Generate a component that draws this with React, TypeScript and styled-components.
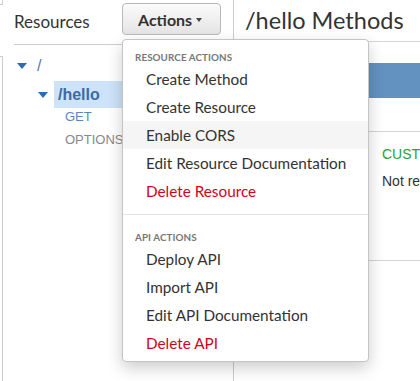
import styled, { createGlobalStyle } from 'styled-components';

const GlobalStyle = createGlobalStyle`
  html, body {
    margin: 0;
    padding: 0;
    background: #fff;
  }
  body {
    font-family: Lato, "Liberation Sans", Arial, sans-serif;
    color: #333;
  }
`;

const Page = styled.div`
  display: grid;
  grid-template-columns: 3px 230px 1fr;
  width: 420px;
  height: 381px;
  overflow: hidden;
`;

/* right edge of the collapsed navigation panel */
const Edge = styled.div`
  display: flex;
  flex-direction: column;
`;

const EdgeBox = styled.div<{ $top?: boolean }>`
  border-right: 1px solid #ccc;
  ${({ $top }) =>
    $top
      ? `height: 4px; border-bottom: 1px solid #ccc;`
      : `flex: 1; margin-top: 51px; border-top: 1px solid #ccc;`}
`;

const LeftCol = styled.div`
  display: flex;
  flex-direction: column;
  min-width: 0;
`;

const LeftHeader = styled.div`
  display: grid;
  grid-template-columns: 108px auto;
  align-items: start;
  margin-left: 11px;
  height: 44px;
  border-bottom: 1px solid #ccc;
`;

const PanelTitle = styled.div`
  margin-top: 12px;
  font-size: 17px;
  line-height: 20px;
  color: #333;
`;

const ActionsWrap = styled.div`
  position: relative;
  margin-top: 3px;
`;

const ActionsButton = styled.button`
  display: flex;
  align-items: center;
  box-sizing: border-box;
  width: 99px;
  height: 32px;
  padding: 0 0 0 15px;
  border: 1px solid #b9b9b9;
  border-radius: 4px;
  background: linear-gradient(#fbfbfb, #e4e4e4);
  font-family: Lato, "Liberation Sans", sans-serif;
  font-weight: 700;
  font-size: 16px;
  color: #333;
`;

const Caret = styled.span`
  display: inline-block;
  margin-left: 4px;
  margin-top: 2px;
  border-left: 3.5px solid transparent;
  border-right: 3.5px solid transparent;
  border-top: 4px solid #444;
`;

const Menu = styled.div`
  position: absolute;
  top: 36px;
  left: 0;
  z-index: 10;
  box-sizing: border-box;
  width: 247px;
  padding: 10px 0 4px;
  background: #fff;
  border: 1px solid #c4c4c4;
  border-radius: 4px;
  box-shadow: 0 6px 16px rgba(0, 0, 0, 0.2);
`;

const MenuHeader = styled.div<{ $spaced?: boolean }>`
  padding-left: 12px;
  margin-top: ${({ $spaced }) => ($spaced ? '15px' : '0')};
  font-size: 9.8px;
  line-height: 15px;
  font-weight: 700;
  color: #777;
  letter-spacing: 0.1px;
  text-transform: uppercase;
`;

const MenuItem = styled.div<{ $danger?: boolean; $active?: boolean }>`
  padding: 4px 0 4px 23px;
  font-size: 15.3px;
  line-height: 20px;
  white-space: nowrap;
  color: ${({ $danger }) => ($danger ? '#d0021b' : '#333')};
  background: ${({ $active }) => ($active ? '#f5f5f5' : 'transparent')};
`;

const Divider = styled.div`
  height: 1px;
  margin-top: 9px;
  background: #e3e3e3;
`;

const Tree = styled.div`
  display: flex;
  flex-direction: column;
  padding-top: 11px;
  font-family: "Liberation Sans", Arial, sans-serif;
`;

const Node = styled.div<{ $depth: number }>`
  display: flex;
  align-items: center;
  padding-left: ${({ $depth }) => 14 + $depth * 21}px;
  margin-top: ${({ $depth }) => ($depth ? 5 : 0)}px;
`;

const Toggle = styled.span`
  flex: none;
  border-left: 5px solid transparent;
  border-right: 5px solid transparent;
  border-top: 6px solid #2b6cb5;
`;

const NodeLabel = styled.span<{ $selected?: boolean }>`
  flex: 1;
  margin-left: ${({ $selected }) => ($selected ? '6px' : '10px')};
  padding-left: ${({ $selected }) => ($selected ? '4px' : '0')};
  font-size: 16px;
  line-height: ${({ $selected }) => ($selected ? '27px' : '20px')};
  font-weight: ${({ $selected }) => ($selected ? 700 : 400)};
  color: ${({ $selected }) => ($selected ? '#3d6aa6' : '#4a7cc0')};
  background: ${({ $selected }) => ($selected ? '#cde3f9' : 'transparent')};
`;

const Methods = styled.div`
  display: flex;
  flex-direction: column;
  gap: 5px;
  padding-left: 62px;
`;

const Method = styled.div<{ $muted?: boolean }>`
  font-size: 13px;
  line-height: 18px;
  color: ${({ $muted }) => ($muted ? '#888' : '#5b86c3')};
`;

const RightCol = styled.div`
  display: flex;
  flex-direction: column;
  border-left: 1px solid #ccc;
  min-width: 0;
`;

const RightHeader = styled.div`
  height: 41px;
  padding-left: 11px;
  border-bottom: 1px solid #d5d5d5;
  font-size: 23.5px;
  line-height: 40px;
  color: #333;
  white-space: nowrap;
`;

const MethodBar = styled.div`
  height: 35px;
  margin: 21px 0 0 12px;
  background: #6391c0;
`;

const Detail = styled.div`
  margin-top: 33px;
  height: 116px;
  border-top: 1px solid #d5d5d5;
  border-bottom: 1px solid #d5d5d5;
  padding: 12px 0 0 148px;
  font-family: "Liberation Sans", Arial, sans-serif;
  font-size: 14px;
  line-height: 20px;
  white-space: nowrap;
`;

const Field = styled.div<{ $accent?: boolean }>`
  color: ${({ $accent }) => ($accent ? '#26a03c' : '#333')};
  margin-bottom: 7px;
`;

const resourceActions = [
  { label: 'Create Method' },
  { label: 'Create Resource' },
  { label: 'Enable CORS', active: true },
  { label: 'Edit Resource Documentation' },
  { label: 'Delete Resource', danger: true },
];

const apiActions = [
  { label: 'Deploy API' },
  { label: 'Import API' },
  { label: 'Edit API Documentation' },
  { label: 'Delete API', danger: true },
];

export default function App() {
  return (
    <>
      <GlobalStyle />
      <Page>
        <Edge>
          <EdgeBox $top />
          <EdgeBox />
        </Edge>
        <LeftCol>
          <LeftHeader>
            <PanelTitle>Resources</PanelTitle>
            <ActionsWrap>
              <ActionsButton>
                Actions<Caret />
              </ActionsButton>
              <Menu>
                <MenuHeader>Resource Actions</MenuHeader>
                {resourceActions.map((a) => (
                  <MenuItem key={a.label} $danger={a.danger} $active={a.active}>
                    {a.label}
                  </MenuItem>
                ))}
                <Divider />
                <MenuHeader $spaced>API Actions</MenuHeader>
                {apiActions.map((a) => (
                  <MenuItem key={a.label} $danger={a.danger}>
                    {a.label}
                  </MenuItem>
                ))}
              </Menu>
            </ActionsWrap>
          </LeftHeader>
          <Tree>
            <Node $depth={0}>
              <Toggle />
              <NodeLabel>/</NodeLabel>
            </Node>
            <Node $depth={1}>
              <Toggle />
              <NodeLabel $selected>/hello</NodeLabel>
            </Node>
            <Methods>
              <Method>GET</Method>
              <Method $muted>OPTIONS</Method>
            </Methods>
          </Tree>
        </LeftCol>
        <RightCol>
          <RightHeader>/hello Methods</RightHeader>
          <MethodBar />
          <Detail>
            <Field $accent>CUSTOM</Field>
            <Field>Not required</Field>
          </Detail>
        </RightCol>
      </Page>
    </>
  );
}
